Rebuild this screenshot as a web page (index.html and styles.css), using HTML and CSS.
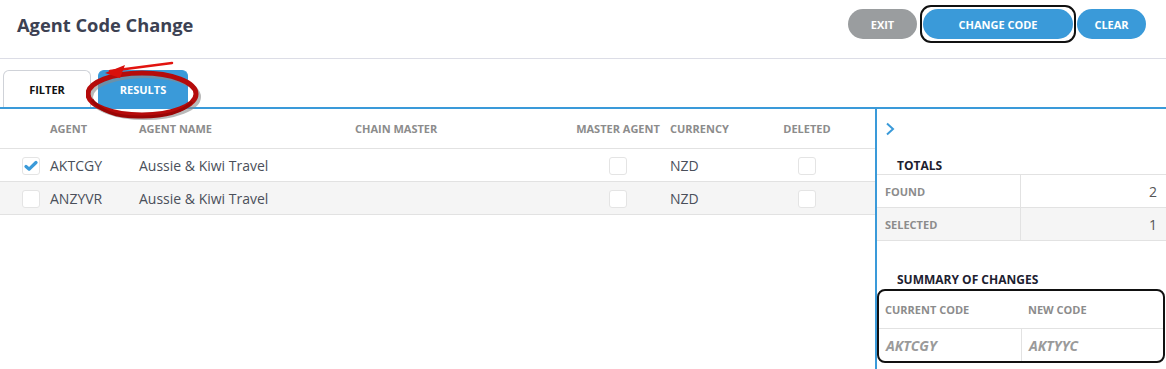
FILE: index.html
```html
<!DOCTYPE html>
<html lang="en">
<head>
  <meta charset="UTF-8" />
  <title>Agent Code Change</title>
  <link rel="stylesheet" href="styles.css">
</head>
<body>
  <header class="page-header">
    <h1>Agent Code Change</h1>
    <div class="actions">
      <button class="btn btn-grey">EXIT</button>
      <span class="highlight-box"><button class="btn btn-blue btn-wide">CHANGE CODE</button></span>
      <button class="btn btn-blue">CLEAR</button>
    </div>
  </header>

  <nav class="tabs">
    <div class="tab">FILTER</div>
    <div class="tab active">RESULTS</div>
    <svg class="scribble" width="130" height="66" viewBox="0 0 130 66">
      <ellipse cx="59" cy="37" rx="54" ry="21" fill="none" stroke="#8a8a8a" stroke-width="4" opacity="0.6" />
      <ellipse cx="56" cy="34" rx="54" ry="21" fill="none" stroke="#b50b0b" stroke-width="5" />
      <path d="M6 40 Q20 58 56 57 Q92 57 106 42" fill="none" stroke="#9a0606" stroke-width="3" />
      <path d="M86 3 L24 11" stroke="#e2140f" stroke-width="2.5" stroke-linecap="round" />
      <path d="M19 13 L39 5 L34 18 Z" fill="#d8100c" />
    </svg>
  </nav>

  <main class="content">
    <section class="results">
      <table class="grid">
        <thead>
          <tr>
            <th class="col-check"></th>
            <th class="col-agent">AGENT</th>
            <th class="col-name">AGENT NAME</th>
            <th class="col-chain">CHAIN MASTER</th>
            <th class="col-master center">MASTER AGENT</th>
            <th class="col-currency">CURRENCY</th>
            <th class="col-deleted center">DELETED</th>
            <th></th>
          </tr>
        </thead>
        <tbody>
          <tr>
            <td class="col-check"><span class="checkbox checked">
              <svg width="14" height="12" viewBox="0 0 14 12"><path d="M2 6.5 L5.2 9.2 L12 2.5" fill="none" stroke="#3a9ad9" stroke-width="3.2" stroke-linecap="round" stroke-linejoin="round" /></svg>
            </span></td>
            <td>AKTCGY</td>
            <td>Aussie &amp; Kiwi Travel</td>
            <td></td>
            <td class="center"><span class="checkbox"></span></td>
            <td>NZD</td>
            <td class="center"><span class="checkbox"></span></td>
            <td></td>
          </tr>
          <tr class="alt">
            <td class="col-check"><span class="checkbox"></span></td>
            <td>ANZYVR</td>
            <td>Aussie &amp; Kiwi Travel</td>
            <td></td>
            <td class="center"><span class="checkbox"></span></td>
            <td>NZD</td>
            <td class="center"><span class="checkbox"></span></td>
            <td></td>
          </tr>
        </tbody>
      </table>
    </section>

    <aside class="side-panel">
      <div class="collapse">
        <svg width="10" height="14" viewBox="0 0 10 14"><path d="M2 1.5 L8 7 L2 12.5" fill="none" stroke="#3a9ad9" stroke-width="2" /></svg>
      </div>

      <h3 class="panel-title">TOTALS</h3>
      <div class="totals">
        <div class="totals-row">
          <span class="label">FOUND</span>
          <span class="value">2</span>
        </div>
        <div class="totals-row alt">
          <span class="label">SELECTED</span>
          <span class="value">1</span>
        </div>
      </div>

      <h3 class="panel-title summary-title">SUMMARY OF CHANGES</h3>
      <div class="summary">
        <div class="summary-head">
          <span class="label">CURRENT CODE</span>
          <span class="label">NEW CODE</span>
        </div>
        <div class="summary-row">
          <span class="code">AKTCGY</span>
          <span class="code">AKTYYC</span>
        </div>
      </div>
    </aside>
  </main>
</body>
</html>
```

FILE: styles.css
```css
:root {
  --blue: #3a9ad9;
  --grey-btn: #9a9d9f;
  --line: #e2e2e2;
  --label: #8c8c8c;
  --text: #4a4f5a;
}

html, body {
  margin: 0;
  padding: 0;
  background: #fff;
  font-family: "Open Sans", "Noto Sans", sans-serif;
  color: var(--text);
  overflow: hidden;
}

.page-header {
  display: flex;
  justify-content: space-between;
  align-items: flex-start;
  height: 59px;
  padding: 9px 20px 0 17px;
  box-sizing: border-box;
  border-bottom: 1px solid #dcdde6;
}

.page-header h1 {
  margin: 0;
  font-size: 18.3px;
  line-height: 31px;
  font-weight: 700;
  color: #3c4152;
}

.actions {
  display: flex;
  align-items: center;
  margin-top: -4px;
}

.btn {
  height: 30px;
  width: 69px;
  border: none;
  border-radius: 15px;
  color: #fff;
  font-family: inherit;
  font-size: 11px;
  font-weight: 700;
  padding: 0;
  cursor: pointer;
}

.btn-grey { background: var(--grey-btn); }
.btn-blue { background: var(--blue); }
.btn-wide { width: 150px; display: block; }

.highlight-box {
  border: 2px solid #111;
  border-radius: 11px;
  padding: 2px 1px;
  margin: 0 1px 0 3px;
}

.tabs {
  position: relative;
  display: flex;
  align-items: flex-end;
  gap: 7px;
  height: 48px;
  padding-left: 3px;
  border-bottom: 2px solid var(--blue);
}

.tab {
  width: 88px;
  height: 37px;
  box-sizing: border-box;
  display: flex;
  align-items: center;
  justify-content: center;
  border: 1px solid #cfd2d8;
  border-bottom: none;
  border-radius: 6px 6px 0 0;
  font-size: 11px;
  font-weight: 700;
  color: #111;
}

.tab.active {
  width: 90px;
  background: var(--blue);
  border-color: var(--blue);
  color: #fff;
}

.scribble {
  position: absolute;
  left: 86px;
  top: 1px;
}

.content {
  display: flex;
  height: 260px;
}

.results {
  flex: 1;
}

.grid {
  width: 100%;
  border-collapse: collapse;
  table-layout: fixed;
}

.grid th {
  height: 39px;
  padding: 0;
  text-align: left;
  font-size: 11px;
  font-weight: 700;
  color: var(--label);
  border-bottom: 1px solid var(--line);
}

.grid td {
  height: 32px;
  padding: 0;
  font-size: 14px;
  color: var(--text);
  border-bottom: 1px solid var(--line);
}

.grid tr.alt td { background: #f5f5f5; }

.grid .center { text-align: center; }

.col-check { width: 50px; }
.col-agent { width: 89px; }
.col-name { width: 216px; }
.col-chain { width: 211px; }
.col-master { width: 104px; }
.col-currency { width: 100px; }
.col-deleted { width: 74px; }

td.col-check { padding-left: 22px; }

.checkbox {
  display: inline-flex;
  align-items: center;
  justify-content: center;
  width: 18px;
  height: 18px;
  box-sizing: border-box;
  border: 1px solid #e4e4e4;
  border-radius: 3px;
  background: #fff;
  vertical-align: middle;
}

.side-panel {
  width: 289px;
  border-left: 2px solid var(--blue);
}

.collapse {
  height: 36px;
  padding: 10px 0 0 8px;
  box-sizing: border-box;
}

.panel-title {
  margin: 0;
  padding: 12px 0 0 20px;
  height: 29px;
  box-sizing: border-box;
  font-size: 12px;
  font-weight: 700;
  color: #1d2130;
}

.totals {
  border-top: 1px solid var(--line);
}

.totals-row {
  display: grid;
  grid-template-columns: 144px 1fr;
  height: 33px;
  border-bottom: 1px solid var(--line);
  box-sizing: border-box;
}

.totals-row.alt { background: #f5f5f5; }

.totals-row .label {
  display: flex;
  align-items: center;
  padding-left: 8px;
  border-right: 1px solid var(--line);
}

.totals-row .value {
  display: flex;
  align-items: center;
  justify-content: flex-end;
  padding-right: 9px;
  font-size: 14px;
  color: #555;
}

.label {
  font-size: 11px;
  font-weight: 700;
  color: var(--label);
}

.summary-title {
  margin-top: 27px;
  padding-top: 3px;
  height: 21px;
}

.summary {
  margin: 0 1px 0 0;
  border: 2px solid #111;
  border-radius: 8px;
  overflow: hidden;
}

.summary-head {
  display: grid;
  grid-template-columns: 143px 1fr;
  height: 37px;
  align-items: center;
  border-bottom: 1px solid var(--line);
}

.summary-head .label { padding-left: 6px; }

.summary-row {
  display: grid;
  grid-template-columns: 143px 1fr;
  height: 32px;
}

.summary-row .code {
  display: flex;
  align-items: center;
  padding-left: 7px;
  font-size: 14px;
  font-weight: 700;
  font-style: italic;
  color: #9a9a9a;
}

.summary-row .code:first-child {
  border-right: 1px solid var(--line);
}
```
